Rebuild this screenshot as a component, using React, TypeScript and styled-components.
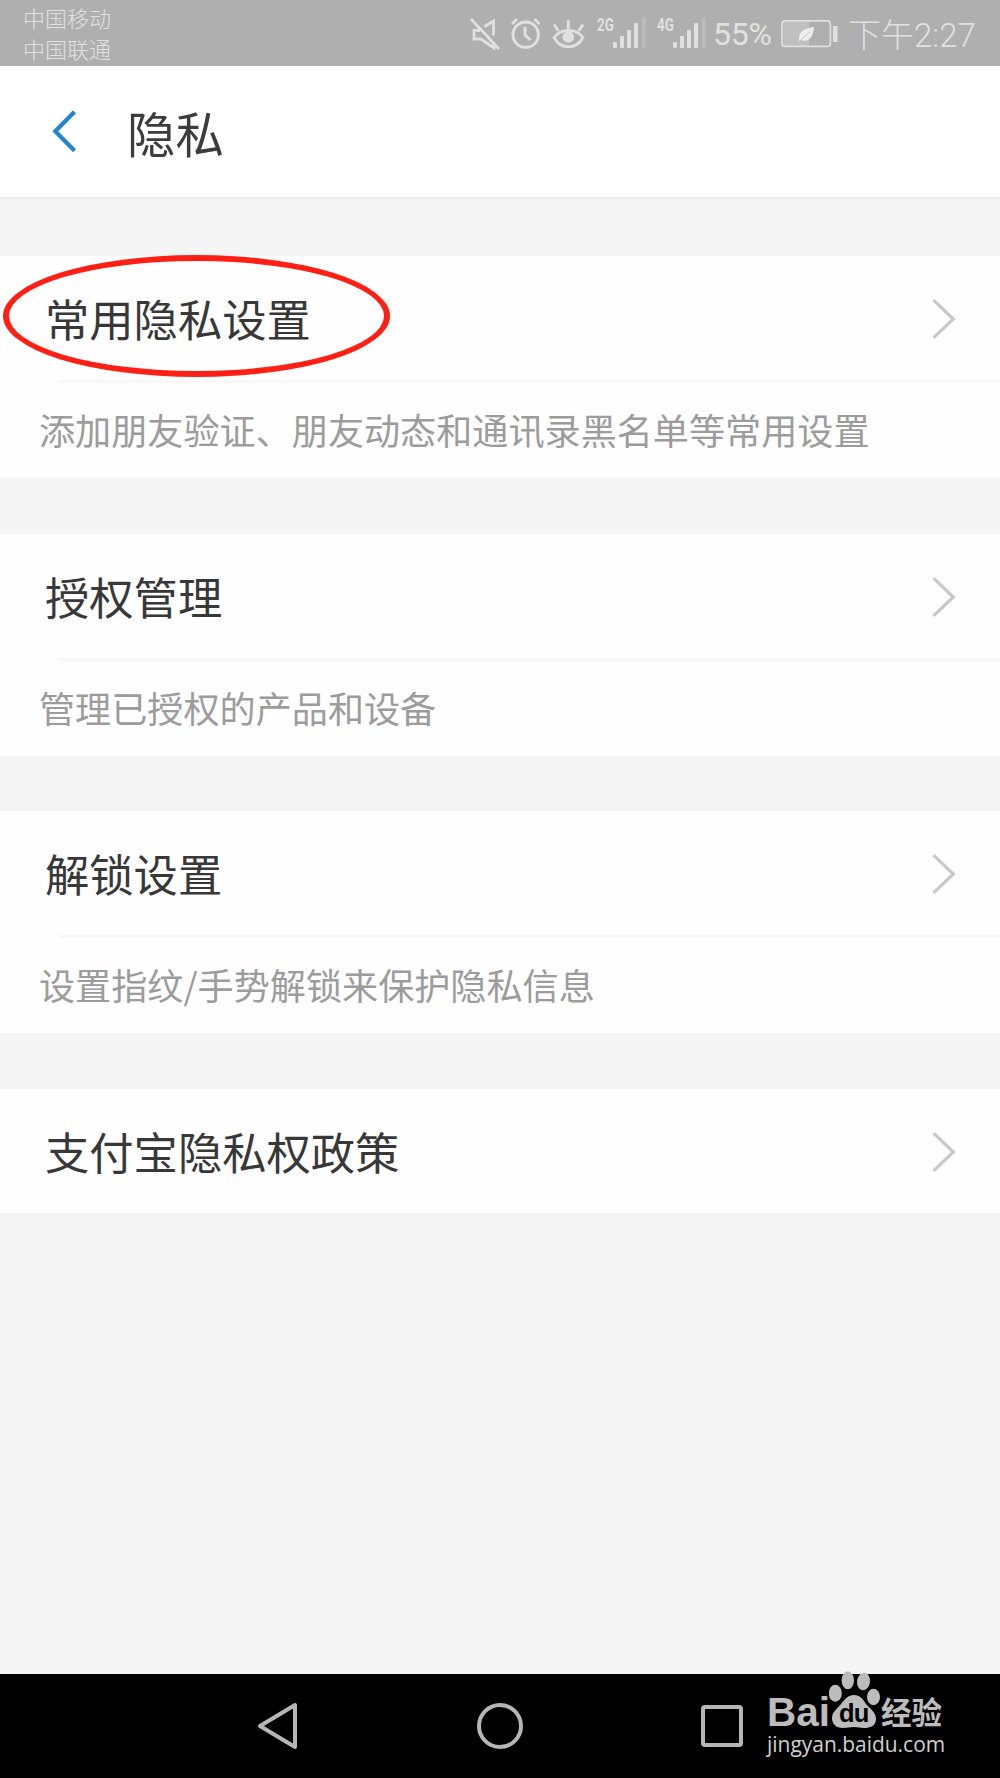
import React from "react";
import styled, { createGlobalStyle } from "styled-components";

const GlobalStyle = createGlobalStyle`
  body {
    margin: 0;
    background: #f5f5f5;
    font-family: "Noto Sans CJK SC", sans-serif;
  }
  svg { display: block; flex: none; }
`;

const Screen = styled.div`
  position: relative;
  display: flex;
  flex-direction: column;
  width: 1000px;
  height: 1778px;
  overflow: hidden;
  background: #f5f5f5;
`;

const StatusBar = styled.header`
  display: flex;
  justify-content: space-between;
  flex: none;
  height: 66px;
  box-sizing: border-box;
  padding: 0 21px 0 23px;
  background: #afafaf;
  color: #e0e0e0;
`;

const Carriers = styled.div`
  display: flex;
  flex-direction: column;
  padding-top: 2px;
  font-size: 22px;
  line-height: 30.5px;
  font-weight: 300;
`;

const Indicators = styled.div`
  display: flex;
  align-items: flex-start;
`;

const Glyph = styled.div<{ $gap: number }>`
  margin-left: ${(p) => p.$gap}px;
`;

const Signal = styled.div<{ $gap: number }>`
  display: flex;
  width: 49px;
  margin-left: ${(p) => p.$gap}px;
`;

const Network = styled.span`
  width: 16px;
  padding-top: 16px;
  font: 700 18px/18px Roboto, sans-serif;
  transform: scaleX(0.74);
  transform-origin: left;
`;

const Percent = styled.span`
  width: 59px;
  margin-left: 7px;
  font: 400 32px/69px Roboto, sans-serif;
  letter-spacing: -0.2px;
  white-space: nowrap;
`;

const Clock = styled.span`
  margin-left: 10px;
  width: 131px;
  font: 300 33px/71px Roboto, "Noto Sans CJK SC", sans-serif;
  white-space: nowrap;
`;

const TitleBar = styled.div`
  display: flex;
  align-items: center;
  flex: none;
  height: 133px;
  box-sizing: border-box;
  padding-left: 50px;
  border-bottom: 2px solid #ececec;
  background: #fff;
`;

const Title = styled.h1`
  margin: 0 0 0 49px;
  font-size: 48.4px;
  line-height: 60px;
  font-weight: 400;
  color: #3c3c3c;
`;

const List = styled.main`
  display: flex;
  flex-direction: column;
  flex: 1;
  gap: 55.5px;
  padding-top: 57px;
`;

const Card = styled.section`
  flex: none;
  background: #fefefe;
`;

const Row = styled.div`
  display: flex;
  align-items: center;
  justify-content: space-between;
  height: 124px;
  padding: 0 44px 0 45px;

  svg { margin-top: 2px; }
`;

const RowTitle = styled.span`
  font-size: 44.3px;
  line-height: 60px;
  color: #383838;
`;

const Description = styled.p`
  margin: 0;
  height: 98px;
  box-sizing: border-box;
  padding-left: 39px;
  background: linear-gradient(#f7f7f7, #f7f7f7) 59px 0 / 941px 3px no-repeat;
  font-size: 36.12px;
  line-height: 98px;
  color: #9c9c9c;
  white-space: nowrap;
`;

const Highlight = styled.div`
  position: absolute;
  left: 3px;
  top: 255px;
  width: 387px;
  height: 122px;
  box-sizing: border-box;
  border: 6px solid #ff2015;
  border-radius: 50%;
`;

const NavBar = styled.nav`
  display: flex;
  align-items: center;
  flex: none;
  height: 104px;
  padding: 0 257px 0 257px;
  justify-content: space-between;
  box-sizing: border-box;
  background: #000;
`;

const Watermark = styled.div`
  position: absolute;
  left: 767px;
  top: 1670px;
  width: 180px;
  color: #bcbcbc;
`;

const Brand = styled.div`
  display: flex;
  height: 60px;
`;

const Bai = styled.span`
  width: 62px;
  padding-top: 24px;
  font: 700 40.5px/36px "Liberation Sans", sans-serif;
`;

const Paw = styled.div`
  position: relative;
  width: 52px;
`;

const Du = styled.span`
  position: absolute;
  left: 10px;
  top: 29px;
  color: #000;
  font: 700 25.5px/29px "Liberation Sans", sans-serif;
  letter-spacing: -0.8px;
`;

const Jingyan = styled.span`
  padding-top: 23px;
  font-size: 30.5px;
  line-height: 36px;
  font-weight: 700;
  white-space: nowrap;
`;

const Site = styled.div`
  color: #d0d0d0;
  font: 400 22.4px/28px "Open Sans", "Noto Sans", sans-serif;
  white-space: nowrap;
  transform: scaleX(0.935);
  transform-origin: left;
`;

const SignalBars = () => (
  <svg width="33" height="66" viewBox="0 0 33 66" fill="currentColor">
    <rect x="0" y="42" width="4" height="6" rx="1" />
    <rect x="7" y="36" width="4" height="12" rx="1" />
    <rect x="14" y="30" width="4" height="18" rx="1" />
    <rect x="21" y="23" width="4" height="25" rx="1" />
    <rect x="29" y="17" width="3.5" height="31" rx="1" opacity=".25" />
  </svg>
);

const MuteIcon = () => (
  <svg width="31" height="66" viewBox="0 0 31 66" fill="none" stroke="currentColor" strokeWidth="2.8">
    <path d="M1 19 29 49" />
    <path d="M14.5 26.5 23.5 21V35.5M10 30.5H4V39H11L24 48V44" />
  </svg>
);

const AlarmIcon = () => (
  <svg width="30" height="66" viewBox="0 0 30 66" fill="none" stroke="currentColor" strokeWidth="2.9">
    <circle cx="14.7" cy="34.7" r="12.7" />
    <path d="M14 27V35L19.5 40M1 24 6 19M23.5 19 28.5 24" />
  </svg>
);

const EyeIcon = () => (
  <svg width="33" height="66" viewBox="0 0 33 66" fill="none" stroke="currentColor" strokeWidth="2.8">
    <path d="M2 37.5C9 28 24 28 31 37.5C24 50 9 50 2 37.5Z" />
    <circle cx="16.3" cy="37" r="5.8" fill="currentColor" stroke="none" />
    <path d="M16.3 20V30M2 24.5 6.5 31M31 24.5 26.5 31" />
  </svg>
);

const BatteryIcon = () => (
  <svg width="57" height="66" viewBox="0 0 57 66" fill="none">
    <rect x="2" y="22" width="26" height="24" fill="#c0c0c0" />
    <rect x=".9" y="20.9" width="48.5" height="25.5" rx="3" stroke="currentColor" strokeWidth="1.6" />
    <rect x="52" y="26" width="4.5" height="16" fill="currentColor" />
    <path d="M18 41C17 31 24 28 33 27C32 36 29 43 20 40Z" fill="#ededed" />
    <path d="M18 42C22 38 25 35 29 32" stroke="#c4c4c4" strokeWidth="1" />
  </svg>
);

const BackIcon = () => (
  <svg width="28" height="44" viewBox="0 0 28 44" fill="none" stroke="#2385cd" strokeWidth="4.2">
    <path d="M24.5 1.7 5.3 21.2 24.5 40.7" />
  </svg>
);

const Chevron = () => (
  <svg width="24" height="42" viewBox="0 0 24 42" fill="none" stroke="#c8c8c8" strokeWidth="3.2">
    <path d="M1.5 2.2 21.3 21 1.5 39.8" />
  </svg>
);

const items = [
  { title: "常用隐私设置", description: "添加朋友验证、朋友动态和通讯录黑名单等常用设置" },
  { title: "授权管理", description: "管理已授权的产品和设备" },
  { title: "解锁设置", description: "设置指纹/手势解锁来保护隐私信息" },
  { title: "支付宝隐私权政策" },
];

export default function App() {
  return (
    <Screen>
      <GlobalStyle />
      <StatusBar>
        <Carriers>
          <span>中国移动</span>
          <span>中国联通</span>
        </Carriers>
        <Indicators>
          <Glyph $gap={0}><MuteIcon /></Glyph>
          <Glyph $gap={10}><AlarmIcon /></Glyph>
          <Glyph $gap={11}><EyeIcon /></Glyph>
          <Signal $gap={12}><Network>2G</Network><SignalBars /></Signal>
          <Signal $gap={11}><Network>4G</Network><SignalBars /></Signal>
          <Percent>55%</Percent>
          <Glyph $gap={9}><BatteryIcon /></Glyph>
          <Clock>下午2:27</Clock>
        </Indicators>
      </StatusBar>
      <TitleBar>
        <BackIcon />
        <Title>隐私</Title>
      </TitleBar>
      <List>
        {items.map((item) => (
          <Card key={item.title}>
            <Row>
              <RowTitle>{item.title}</RowTitle>
              <Chevron />
            </Row>
            {item.description && <Description>{item.description}</Description>}
          </Card>
        ))}
      </List>
      <NavBar>
        <svg width="42" height="50" viewBox="0 0 42 50" fill="none" stroke="#b6b6b6" strokeWidth="4" strokeLinejoin="round">
          <path d="M3 25 38 4V46Z" />
        </svg>
        <svg width="48" height="48" viewBox="0 0 48 48" fill="none" stroke="#b6b6b6" strokeWidth="4">
          <circle cx="24" cy="24" r="21" />
        </svg>
        <svg width="42" height="42" viewBox="0 0 42 42" fill="none" stroke="#b6b6b6" strokeWidth="4">
          <rect x="2" y="2" width="38" height="38" rx="2" />
        </svg>
      </NavBar>
      <Highlight />
      <Watermark>
        <Brand>
          <Bai>Bai</Bai>
          <Paw>
            <svg width="52" height="60" viewBox="0 0 52 60" fill="#bcbcbc">
              <ellipse cx="6.3" cy="23.3" rx="6.5" ry="8.5" />
              <ellipse cx="18.8" cy="10.3" rx="6.2" ry="9" />
              <ellipse cx="34.5" cy="11.5" rx="6.5" ry="8.8" transform="rotate(8 34.5 11.5)" />
              <ellipse cx="44.5" cy="27" rx="6.5" ry="8.3" />
              <path d="M25 25C31 25 34 29 37 34C41 39 47 42 47 49C47 56 41 58 35 58C31 58 29 57 25 57C21 57 18 58 14 58C7 58 3 54 3 48C3 42 8 39 12 34C16 29 19 25 25 25Z" />
            </svg>
            <Du>du</Du>
          </Paw>
          <Jingyan>经验</Jingyan>
        </Brand>
        <Site>jingyan.baidu.com</Site>
      </Watermark>
    </Screen>
  );
}
